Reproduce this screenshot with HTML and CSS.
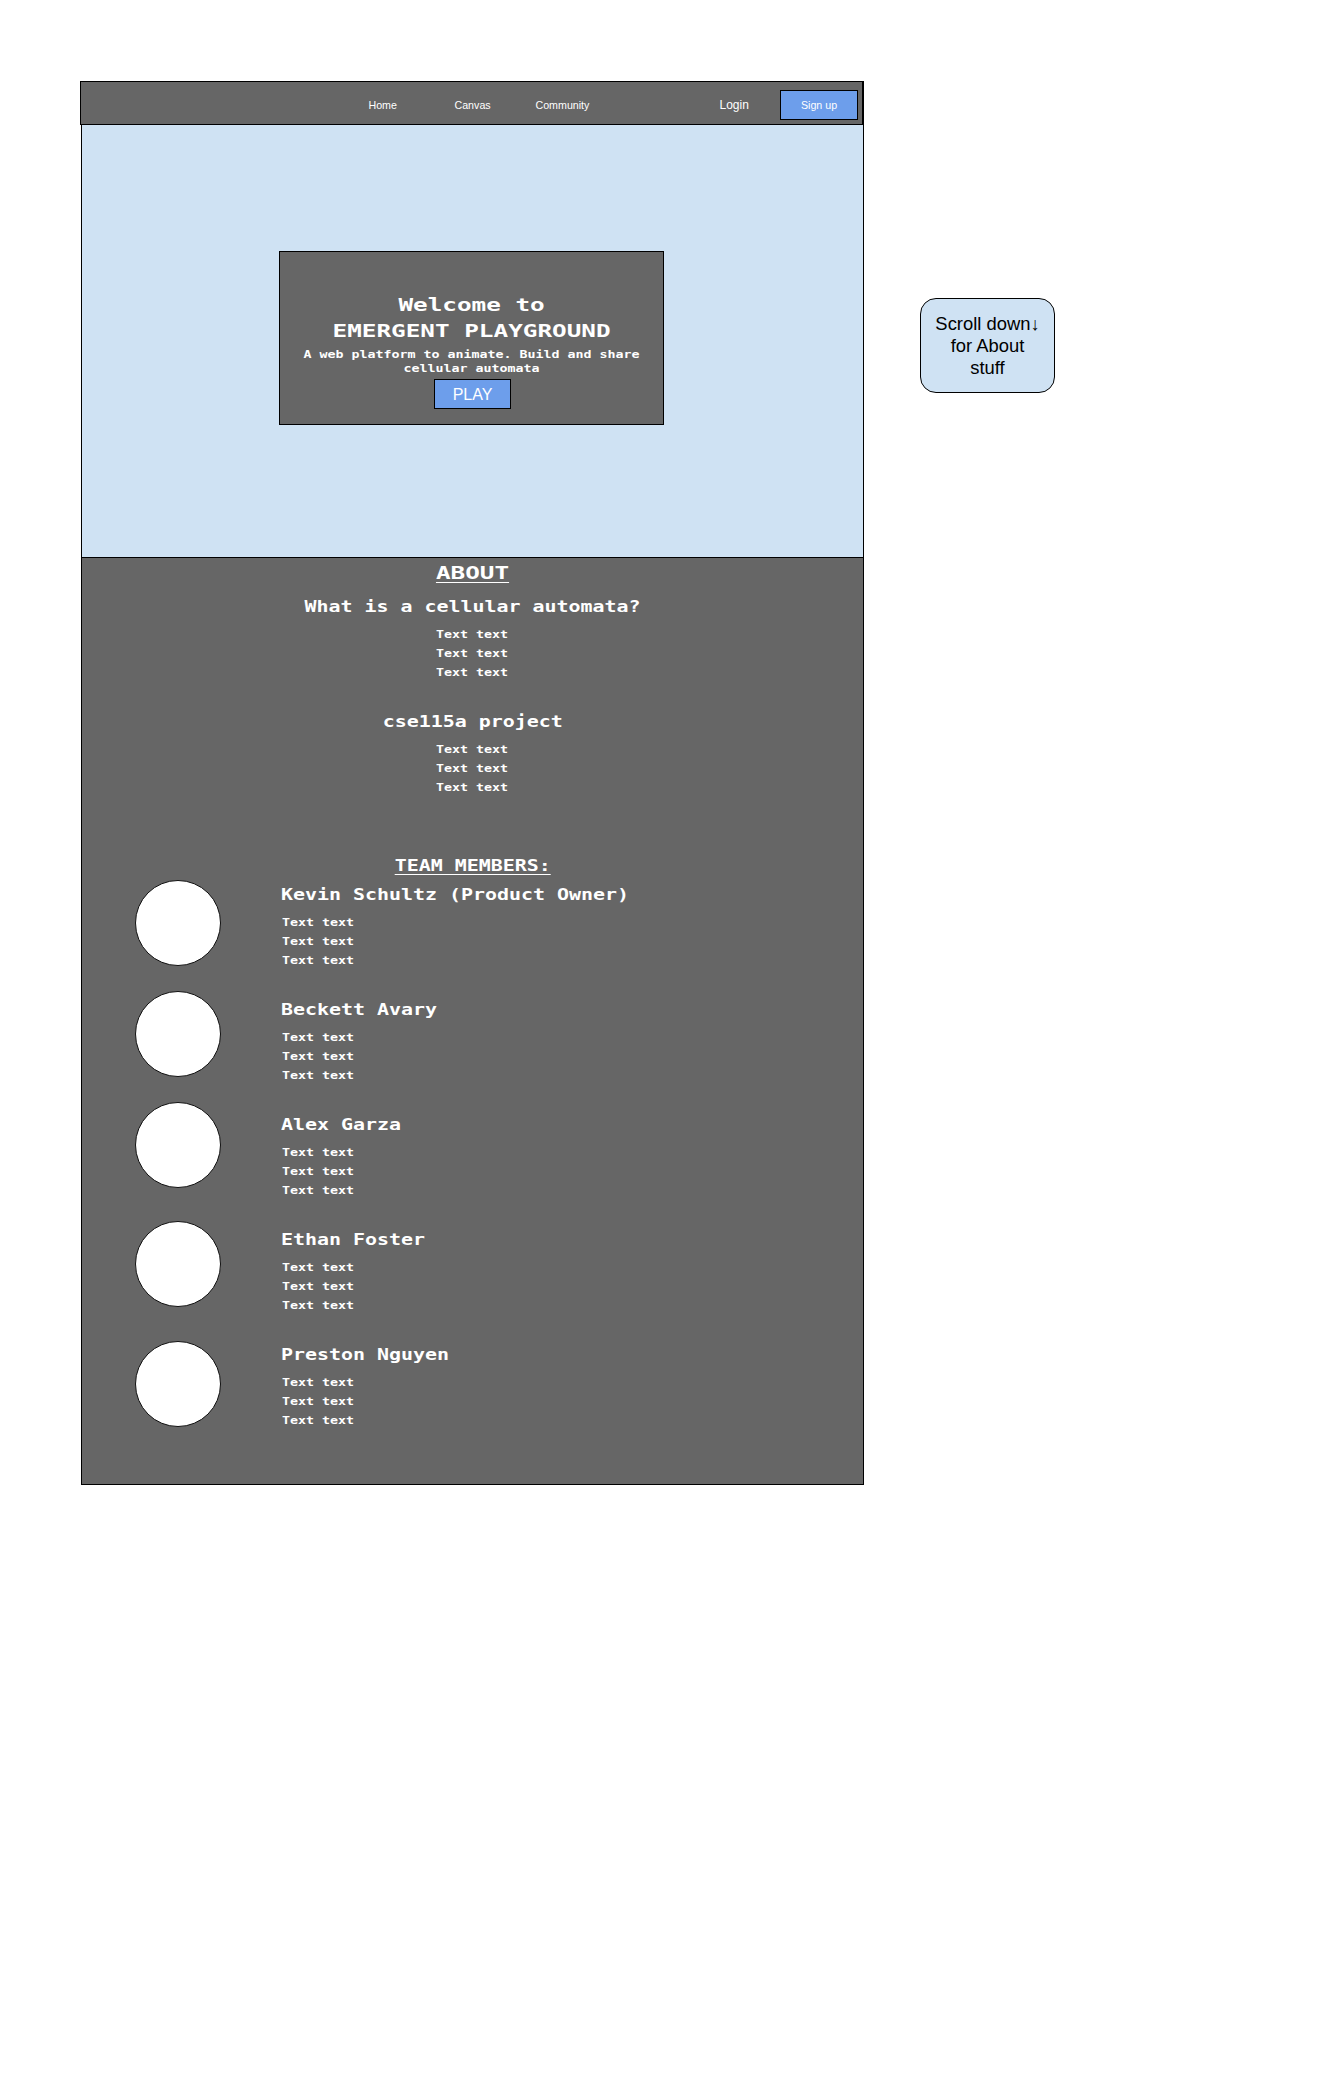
FILE: index.html
```html
<!DOCTYPE html>
<html lang="en">
<head>
<meta charset="utf-8">
<title>Emergent Playground</title>
<link rel="stylesheet" href="styles.css">
</head>
<body>
<div class="board">
  <div class="site">
    <nav class="nav">
      <a class="home">Home</a>
      <a class="canvas">Canvas</a>
      <a class="community">Community</a>
      <a class="login">Login</a>
      <a class="button signup">Sign up</a>
    </nav>
    <main class="page">
      <section class="hero">
        <div class="card">
          <h1 class="pixel large">Welcome to<br>EMERGENT PLAYGROUND</h1>
          <p class="pixel tagline">A web platform to animate. Build and share<br>cellular automata</p>
          <a class="button play">PLAY</a>
        </div>
      </section>
      <section class="about">
        <h2 class="pixel large underlined">ABOUT</h2>
        <article class="entry">
          <h3 class="pixel medium">What is a cellular automata?</h3>
          <p class="pixel small">Text text<br>Text text<br>Text text</p>
        </article>
        <article class="entry">
          <h3 class="pixel medium">cse115a project</h3>
          <p class="pixel small">Text text<br>Text text<br>Text text</p>
        </article>
      </section>
      <section class="team">
        <h2 class="pixel medium underlined">TEAM MEMBERS:</h2>
        <div class="columns">
          <div class="avatars">
            <span class="avatar"></span>
            <span class="avatar"></span>
            <span class="avatar"></span>
            <span class="avatar fourth"></span>
            <span class="avatar fifth"></span>
          </div>
          <div class="members">
            <article class="entry">
              <h3 class="pixel medium">Kevin Schultz (Product Owner)</h3>
              <p class="pixel small">Text text<br>Text text<br>Text text</p>
            </article>
            <article class="entry">
              <h3 class="pixel medium">Beckett Avary</h3>
              <p class="pixel small">Text text<br>Text text<br>Text text</p>
            </article>
            <article class="entry">
              <h3 class="pixel medium">Alex Garza</h3>
              <p class="pixel small">Text text<br>Text text<br>Text text</p>
            </article>
            <article class="entry">
              <h3 class="pixel medium">Ethan Foster</h3>
              <p class="pixel small">Text text<br>Text text<br>Text text</p>
            </article>
            <article class="entry">
              <h3 class="pixel medium">Preston Nguyen</h3>
              <p class="pixel small">Text text<br>Text text<br>Text text</p>
            </article>
          </div>
        </div>
      </section>
    </main>
  </div>
  <aside class="note">Scroll down↓<br>for About<br>stuff</aside>
</div>
</body>
</html>
```

FILE: styles.css
```css
* { box-sizing: border-box; }

body {
  margin: 0;
  background: #fff;
  font-family: "Liberation Sans", Arial, sans-serif;
}

h1, h2, h3, p { margin: 0; }

.board {
  display: flex;
  align-items: flex-start;
  gap: 56px;
  min-height: 2087px;
  padding: 81px 0 0 80px;
}

.site { width: 784px; }

.nav {
  position: relative;
  display: flex;
  align-items: center;
  width: 784px;
  height: 44px;
  padding: 4px 4px 0 0;
  border: 1px solid #000;
  border-right-width: 2px;
  background: #666;
  color: #fff;
  font-size: 10.67px;
}

.home { width: 86px; margin-left: 287.5px; }
.canvas { width: 81px; }
.community { width: 184px; }
.login { font-size: 12px; }

.button {
  display: flex;
  align-items: center;
  justify-content: center;
  height: 30px;
  border: 1px solid #000;
  background: #6d9eeb;
  color: #fff;
}

.signup { width: 78px; margin-left: auto; }

.page {
  width: 783px;
  height: 1361px;
  margin: -1px 0 0 1px;
  border: 1px solid #000;
  background: #666;
}

.hero {
  display: flex;
  align-items: flex-start;
  height: 433px;
  padding: 126px 0 0 197px;
  border-bottom: 1px solid #000;
  background: #cfe2f3;
}

.card {
  display: flex;
  flex-direction: column;
  align-items: center;
  width: 385px;
  height: 174px;
  padding-top: 40px;
  border: 1px solid #000;
  background: #666;
}

/* wide arcade-style lettering */
.pixel {
  color: #fff;
  font-family: "DejaVu Sans Mono", monospace;
  font-weight: bold;
  white-space: nowrap;
  text-align: center;
  transform: scaleX(1.329);
}

.large { font-size: 18.3px; line-height: 26px; }
.medium { font-size: 15px; line-height: 20px; }
.small { font-size: 10px; line-height: 19px; }
.tagline { font-size: 10px; line-height: 14px; margin-top: 4px; }

.underlined {
  text-decoration: underline;
  text-decoration-thickness: 1px;
  text-underline-offset: 3px;
}

.play { width: 77px; margin: 3px 0 0 2px; padding-top: 1px; font-size: 16px; }

.about {
  display: flex;
  flex-direction: column;
  align-items: center;
  padding-top: 2px;
}

.about .large { margin-bottom: 11px; }

.entry {
  display: flex;
  flex-direction: column;
  align-items: center;
  gap: 8px;
  height: 115px;
}

.team {
  display: flex;
  flex-direction: column;
  align-items: center;
  padding-top: 29px;
}

.columns {
  display: flex;
  align-self: stretch;
  gap: 61px;
  padding: 4px 0 0 53px;
}

.avatars {
  display: flex;
  flex-direction: column;
  gap: 25px;
}

.avatar {
  width: 86px;
  height: 86px;
  border: 1px solid #111;
  border-radius: 50%;
  background: #fff;
}

.fourth { margin-top: 8px; }
.fifth { margin-top: 9px; }

.members { padding-top: 5px; }
.members .entry { align-items: flex-start; }
.members .pixel { text-align: left; transform-origin: left; }
.members .medium { margin-left: -1px; }

.note {
  width: 135px;
  height: 95px;
  margin-top: 217px;
  padding-top: 14px;
  border: 1px solid #000;
  border-radius: 16px;
  background: #cfe2f3;
  color: #000;
  font-size: 18.4px;
  line-height: 22px;
  text-align: center;
  white-space: nowrap;
}
```
